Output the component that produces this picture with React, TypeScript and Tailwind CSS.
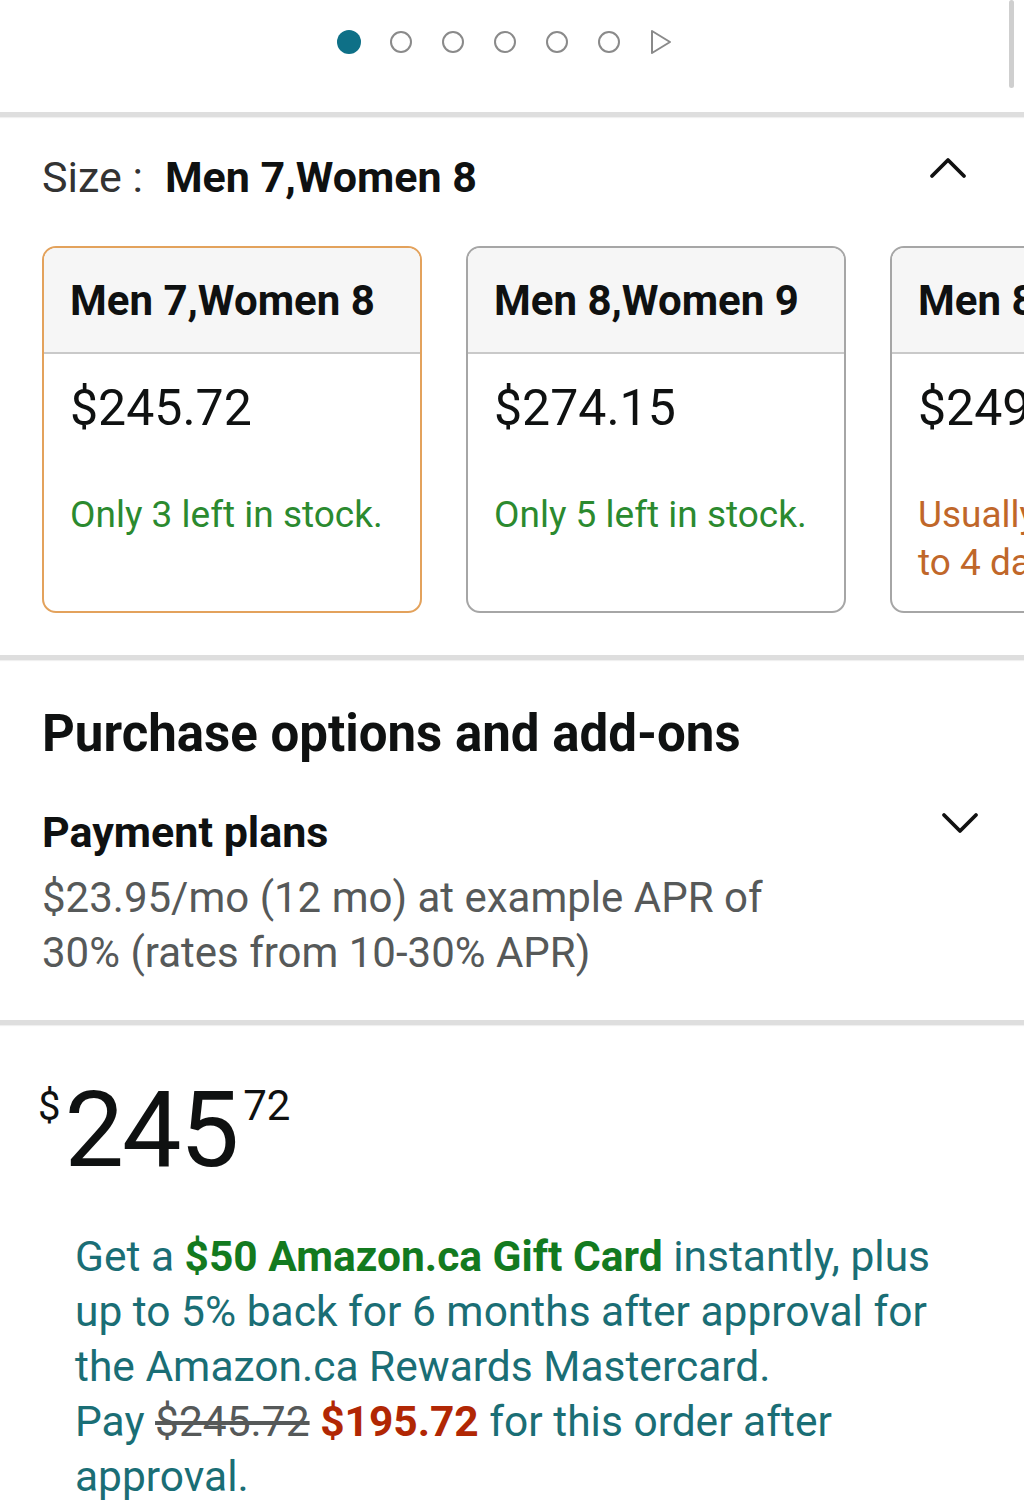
import React from 'react';

const font = "font-['Roboto','Liberation_Sans',sans-serif]";

const sizes = [
  { label: 'Men 7,Women 8', price: '$245.72', stock: ['Only 3 left in stock.'], selected: true, tone: 'green' },
  { label: 'Men 8,Women 9', price: '$274.15', stock: ['Only 5 left in stock.'], selected: false, tone: 'green' },
  { label: 'Men 8.5,Women 9.5', price: '$249.60', stock: ['Usually ships within 2', 'to 4 days.'], selected: false, tone: 'orange' },
];

const Divider = () => <div className="h-[5px] w-full bg-[#dedede] shadow-[0_1px_1px_rgba(0,0,0,0.06)]" />;

const App: React.FC = () => {
  return (
    <div className={`relative w-[1024px] h-[1506px] overflow-hidden bg-white text-[#0f1111] ${font}`}>
      {/* scroll indicator */}
      <div className="absolute right-[10px] top-0 h-[88px] w-[5px] rounded-full bg-[#cfcfcf]" />

      {/* Carousel dots */}
      <div className="h-[112px] flex items-start pl-[323px] pt-[30px]">
        <span className="w-[52px] h-[24px] flex items-center justify-center">
          <span className="w-[24px] h-[24px] rounded-full bg-[#0e7087]" />
        </span>
        {[0, 1, 2, 3, 4].map((i) => (
          <span key={i} className="w-[52px] h-[24px] flex items-center justify-center">
            <span className="w-[22px] h-[22px] rounded-full border-2 border-[#8a8a8a]" />
          </span>
        ))}
        <span className="w-[52px] h-[24px] flex items-center justify-center">
          <svg width="24" height="26" viewBox="0 0 24 26">
            <path d="M3 2 L21 13 L3 24 Z" fill="none" stroke="#8a8a8a" strokeWidth="2" strokeLinejoin="round" />
          </svg>
        </span>
      </div>
      <Divider />

      {/* Size header */}
      <div className="flex items-center justify-between px-[42px] h-[129px] pb-[10px]">
        <div className="text-[43px] leading-[56px]">
          <span className="text-[#333]">Size :</span>
          <span className="font-bold ml-[22px]">Men 7,Women 8</span>
        </div>
        <svg width="40" height="26" viewBox="0 0 40 26" className="mr-[14px] mt-[-20px]">
          <path d="M4 22 L20 6 L36 22" fill="none" stroke="#111" strokeWidth="3.8" strokeLinecap="round" strokeLinejoin="round" />
        </svg>
      </div>

      {/* Size cards */}
      <div className="flex gap-[44px] pl-[42px] h-[409px]">
        {sizes.map((s) => (
          <div
            key={s.label}
            className={`shrink-0 w-[380px] h-[367px] rounded-[14px] border-2 overflow-hidden ${s.selected ? 'border-[#e3a25c]' : 'border-[#a6a6a6]'}`}
          >
            <div className="h-[106px] bg-[#f6f6f6] border-b-2 border-[#c9c9c9] flex items-center px-[26px]">
              <span className="text-[42px] font-bold whitespace-nowrap">{s.label}</span>
            </div>
            <div className="px-[26px] pt-[26px]">
              <div className="text-[50px] leading-[56px] whitespace-nowrap">{s.price}</div>
              <div
                className={`mt-[55px] text-[37px] leading-[48px] ${s.tone === 'green' ? 'text-[#2b8a2f]' : 'text-[#c0672a]'}`}
              >
                {s.stock.map((line) => (
                  <div key={line} className="whitespace-nowrap">{line}</div>
                ))}
              </div>
            </div>
          </div>
        ))}
      </div>
      <Divider />

      {/* Purchase options */}
      <div className="px-[42px] h-[360px] pt-[44px]">
        <h2 className="text-[51px] font-bold leading-[60px]">Purchase options and add-ons</h2>
        <div className="flex justify-between mt-[42px]">
          <div>
            <div className="text-[43px] font-bold leading-[52px]">Payment plans</div>
            <div className="text-[42px] text-[#565959] leading-[55px] mt-[12px] w-[740px]">
              $23.95/mo (12 mo) at example APR of 30% (rates from 10-30% APR)
            </div>
          </div>
          <svg width="40" height="26" viewBox="0 0 40 26" className="mr-[2px] mt-[4px]">
            <path d="M4 5 L20 21 L36 5" fill="none" stroke="#111" strokeWidth="3.8" strokeLinecap="round" strokeLinejoin="round" />
          </svg>
        </div>
      </div>
      <Divider />

      {/* Price */}
      <div className="flex items-start pl-[38px] pt-[58px] h-[204px]">
        <span className="text-[40px] leading-none mt-[4px]">$</span>
        <span className="text-[106px] leading-none ml-[4px] -mt-[6px] tracking-[-2px]">245</span>
        <span className="text-[42px] leading-none ml-[6px] mt-[2px]">72</span>
      </div>

      {/* Promo */}
      <div className="pl-[75px] w-[960px] text-[42.5px] leading-[55px] text-[#1a6e75]">
        Get a <span className="font-bold text-[#137a1f]">$50 Amazon.ca Gift Card</span> instantly, plus up to 5% back
        for 6 months after approval for the Amazon.ca Rewards Mastercard.
        <br />
        Pay <span className="line-through text-[#565959]">$245.72</span>{' '}
        <span className="font-bold text-[#b12704]">$195.72</span> for this order after approval.
      </div>
    </div>
  );
};

export default App;
